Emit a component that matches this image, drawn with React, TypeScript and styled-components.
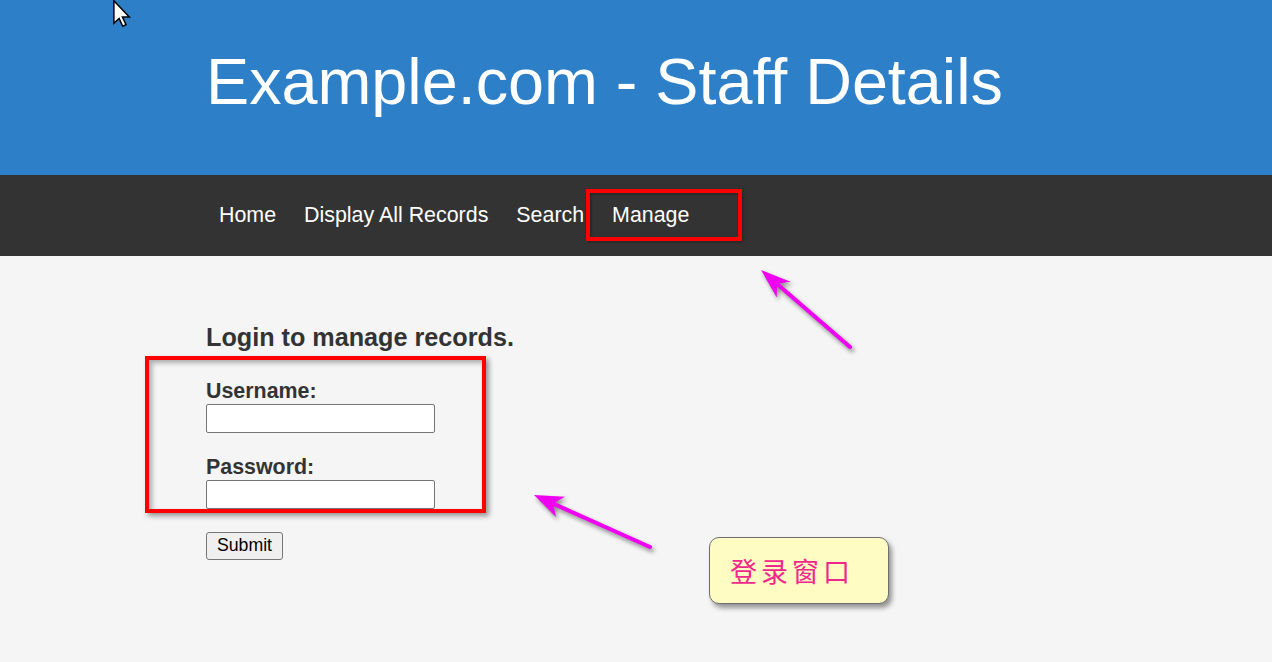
import React from "react";
import styled, { createGlobalStyle } from "styled-components";

const GlobalStyle = createGlobalStyle`
  html, body { margin: 0; padding: 0; }
  body {
    font-family: "Liberation Sans", Arial, sans-serif;
    background: #f5f5f5;
    color: #333;
  }
  * { box-sizing: border-box; }
`;

const Page = styled.div`
  position: relative;
  width: 100%;
  min-height: 662px;
  overflow: hidden;
`;

const Container = styled.div`
  width: 860px;
  margin: 0 auto;
`;

const Header = styled.header`
  background: #2d80c8;
  height: 175px;
  padding-top: 44px;
`;

const Title = styled.h1`
  margin: 0;
  font-size: 64.7px;
  font-weight: normal;
  line-height: normal;
  color: #ffffff;
  white-space: nowrap;
`;

const Nav = styled.nav`
  background: #333333;
  height: 81px;
`;

const NavList = styled.ul`
  list-style: none;
  margin: 0 0 0 -1px;
  padding: 0;
  display: flex;
  height: 81px;
`;

const NavItem = styled.li`
  position: relative;
  height: 100%;
`;

const NavLink = styled.a`
  display: block;
  padding: 27.5px 14px 0;
  font-size: 21.4px;
  line-height: normal;
  color: #ffffff;
  text-decoration: none;
  white-space: nowrap;
`;

const NavHighlight = styled.span`
  position: absolute;
  left: -12.5px;
  right: -39px;
  top: 14px;
  bottom: 15px;
  border: 4px solid #ff0000;
  box-shadow: 1px 1px 3px rgba(0, 0, 0, 0.35), inset 1px 1px 3px rgba(0, 0, 0, 0.35);
  pointer-events: none;
`;

const Main = styled.main`
  padding-top: 67px;
  padding-bottom: 40px;
`;

const Heading = styled.h3`
  margin: 0;
  font-size: 25.2px;
  font-weight: bold;
  line-height: normal;
  color: #333;
`;

const Form = styled.form`
  display: flex;
  flex-direction: column;
  align-items: flex-start;
  margin-top: 27px;
`;

const FieldGroup = styled.div`
  position: relative;
  display: flex;
  flex-direction: column;
  gap: 21.5px;
`;

const Field = styled.div`
  display: flex;
  flex-direction: column;
  align-items: flex-start;
`;

const Label = styled.label`
  font-size: 21.4px;
  font-weight: bold;
  line-height: normal;
  color: #333;
`;

const Input = styled.input`
  margin-top: 0;
  width: 229px;
  height: 29px;
  background: #ffffff;
  border: 1px solid #767676;
  border-radius: 2px;
  padding: 1px 2px;
  font-size: 16px;
`;

const FormFrame = styled.span`
  position: absolute;
  left: -61px;
  top: -23.5px;
  width: 341px;
  height: 157px;
  border: 4px solid #ff0000;
  box-shadow: 3px 3px 5px rgba(0, 0, 0, 0.4), inset 3px 3px 5px rgba(0, 0, 0, 0.3);
  pointer-events: none;
`;

const SubmitButton = styled.button`
  margin-top: 23px;
  width: 77px;
  height: 28px;
  padding: 0;
  background: #efefef;
  border: 1px solid #767676;
  border-radius: 3px;
  font-family: "Liberation Sans", Arial, sans-serif;
  font-size: 17.7px;
  color: #000;
`;

const ArrowSvg = styled.svg`
  position: absolute;
  overflow: visible;
  filter: drop-shadow(2px 3px 2px rgba(0, 0, 0, 0.45));
  pointer-events: none;
`;

const Callout = styled.div`
  position: absolute;
  left: 709px;
  top: 537px;
  width: 180px;
  height: 67px;
  display: flex;
  align-items: center;
  padding-left: 20px;
  background: #fefcc3;
  border: 1px solid #6e6e6e;
  border-radius: 10px;
  box-shadow: 3px 4px 5px rgba(0, 0, 0, 0.4);
  font-family: "Noto Sans CJK SC", "Noto Sans CJK JP", serif;
  font-size: 27px;
  letter-spacing: 4px;
  color: #f0288c;
`;

const Cursor = styled.svg`
  position: absolute;
  left: 113px;
  top: 0;
`;

type Pt = { x: number; y: number };

function Arrow({ tip, tail, head = 29, half = 11, notch = 21 }: { tip: Pt; tail: Pt; head?: number; half?: number; notch?: number }) {
  const dx = tail.x - tip.x;
  const dy = tail.y - tip.y;
  const len = Math.hypot(dx, dy);
  const ux = dx / len;
  const uy = dy / len;
  const px = -uy;
  const py = ux;
  const minX = Math.min(tip.x, tail.x) - 15;
  const minY = Math.min(tip.y, tail.y) - 15;
  const w = Math.abs(dx) + 30;
  const h = Math.abs(dy) + 30;
  const t = { x: tip.x - minX, y: tip.y - minY };
  const e = { x: tail.x - minX, y: tail.y - minY };
  const w1 = { x: t.x + ux * head + px * half, y: t.y + uy * head + py * half };
  const w2 = { x: t.x + ux * head - px * half, y: t.y + uy * head - py * half };
  const n = { x: t.x + ux * notch, y: t.y + uy * notch };
  return (
    <ArrowSvg
      width={w}
      height={h}
      viewBox={`0 0 ${w} ${h}`}
      style={{ left: minX, top: minY }}
    >
      <line x1={n.x} y1={n.y} x2={e.x} y2={e.y} stroke="#f000f0" strokeWidth={4} strokeLinecap="round" />
      <polygon
        points={`${t.x},${t.y} ${w1.x},${w1.y} ${n.x},${n.y} ${w2.x},${w2.y}`}
        fill="#f000f0"
      />
    </ArrowSvg>
  );
}

export default function App() {
  return (
    <>
      <GlobalStyle />
      <Page>
        <Header>
          <Container>
            <Title>Example.com - Staff Details</Title>
          </Container>
        </Header>
        <Nav>
          <Container>
            <NavList>
              <NavItem><NavLink href="#">Home</NavLink></NavItem>
              <NavItem><NavLink href="#">Display All Records</NavLink></NavItem>
              <NavItem><NavLink href="#">Search</NavLink></NavItem>
              <NavItem>
                <NavLink href="#">Manage</NavLink>
                <NavHighlight />
              </NavItem>
            </NavList>
          </Container>
        </Nav>
        <Main>
          <Container>
            <Heading>Login to manage records.</Heading>
            <Form onSubmit={(e) => e.preventDefault()}>
              <FieldGroup>
                <Field>
                  <Label htmlFor="username">Username:</Label>
                  <Input id="username" type="text" />
                </Field>
                <Field>
                  <Label htmlFor="password">Password:</Label>
                  <Input id="password" type="password" />
                </Field>
                <FormFrame />
              </FieldGroup>
              <SubmitButton type="submit">Submit</SubmitButton>
            </Form>
          </Container>
        </Main>

        <Arrow tip={{ x: 761, y: 270 }} tail={{ x: 850, y: 347 }} head={30} half={10.5} notch={21} />
        <Arrow tip={{ x: 534, y: 495 }} tail={{ x: 650, y: 547 }} head={29} half={11} notch={21} />
        <Callout>登录窗口</Callout>

        <Cursor width="19" height="27" viewBox="0 0 12.5 18">
          <path
            d="M0.5 0.5 L0.5 15.5 L4 12.3 L6.4 17.5 L8.6 16.5 L6.2 11.4 L10.8 11.4 Z"
            fill="#ffffff"
            stroke="#000000"
            strokeWidth="1"
            strokeLinejoin="miter"
          />
        </Cursor>
      </Page>
    </>
  );
}
